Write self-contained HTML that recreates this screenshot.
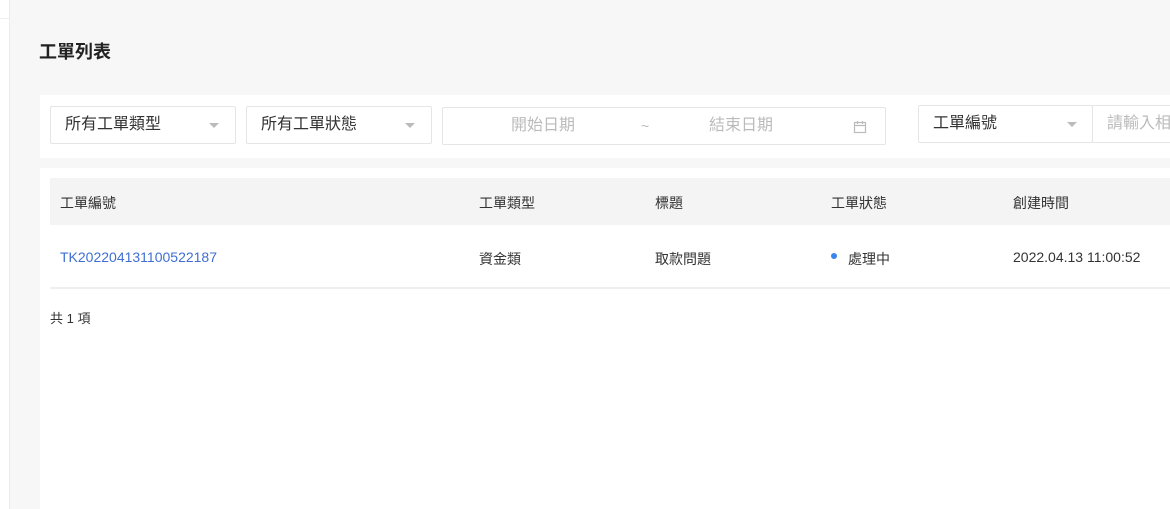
<!DOCTYPE html>
<html><head><meta charset="utf-8"><style>
*{margin:0;padding:0;box-sizing:border-box}
body{width:1170px;height:509px;overflow:hidden;background:#f7f7f7;font-family:"Liberation Sans","Noto Sans CJK TC",sans-serif;position:relative;color:#333}
.side{position:absolute;left:0;top:0;width:10px;height:509px;background:#fff;border-right:1px solid #ececec}
.side:before{content:"";position:absolute;left:0;top:18px;width:10px;height:1px;background:#eee}
h1{position:absolute;left:39px;top:38px;font-size:18px;font-weight:bold;color:#222}
.card{position:absolute;left:40px;background:#fff}
.box{position:absolute;top:106px;height:38px;border:1px solid #e5e5e5;border-radius:2px;background:#fff;font-size:16px;color:#333;line-height:36px;padding-left:14px}
.arr{position:absolute;top:16px;width:0;height:0;border-left:5px solid transparent;border-right:5px solid transparent;border-top:5px solid #bbb}
.ph{color:#bbb}
.t{position:absolute;font-size:14px}
</style></head><body>
<div class="side"></div>
<h1>工單列表</h1>
<div class="card" style="top:95px;width:1130px;height:63px"></div>
<div class="box" style="left:50px;width:186px">所有工單類型<span class="arr" style="left:158px"></span></div>
<div class="box" style="left:246px;width:186px">所有工單狀態<span class="arr" style="left:158px"></span></div>
<div class="box" style="left:442px;width:444px;top:107px">
<span class="ph" style="position:absolute;left:68px">開始日期</span>
<span class="ph" style="position:absolute;left:198px;font-size:14px">~</span>
<span class="ph" style="position:absolute;left:266px">結束日期</span>
<svg style="position:absolute;left:410px;top:12px" width="14" height="14" viewBox="0 0 14 14" fill="none" stroke="#bbb" stroke-width="1.2"><rect x="1.5" y="2.5" width="11" height="10"/><path d="M1.5 5.5h11M4.5 1v3M9.5 1v3"/></svg>
</div>
<div class="box" style="left:918px;width:175px;top:105px">工單編號<span class="arr" style="left:148px"></span></div>
<div class="box" style="left:1092px;width:100px;top:105px"><span class="ph">請輸入相關</span></div>
<div class="card" style="top:168px;width:1130px;height:341px"></div>
<div style="position:absolute;left:50px;top:178px;width:1120px;height:47px;background:#f4f4f4"></div>
<div style="position:absolute;left:50px;top:287px;width:1120px;height:2px;background:#efefef"></div>
<div class="t" style="left:60px;top:193px">工單編號</div>
<div class="t" style="left:479px;top:193px">工單類型</div>
<div class="t" style="left:655px;top:193px">標題</div>
<div class="t" style="left:831px;top:193px">工單狀態</div>
<div class="t" style="left:1013px;top:193px">創建時間</div>
<div class="t" style="left:60px;top:249px;color:#3f6fd1">TK202204131100522187</div>
<div class="t" style="left:479px;top:249px">資金類</div>
<div class="t" style="left:655px;top:249px">取款問題</div>
<div style="position:absolute;left:831px;top:253px;width:6px;height:6px;border-radius:50%;background:#3a86f0"></div>
<div class="t" style="left:848px;top:249px">處理中</div>
<div class="t" style="left:1013px;top:249px">2022.04.13 11:00:52</div>
<div class="t" style="left:50px;top:308px;font-size:13px">共 1 項</div>
</body></html>
